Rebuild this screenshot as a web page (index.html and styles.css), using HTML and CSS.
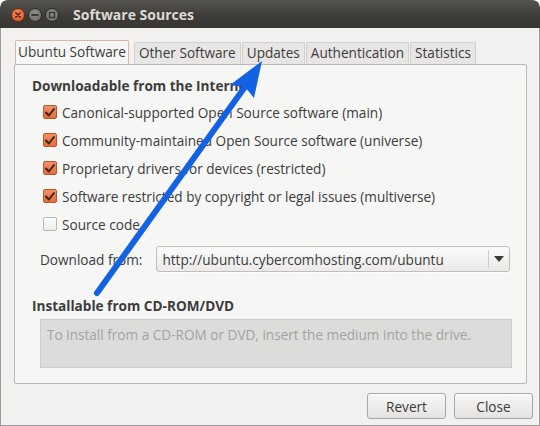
FILE: index.html
```html
<!DOCTYPE html>
<html>
<head>
<meta charset="utf-8">
<title>Software Sources</title>
<link rel="stylesheet" href="styles.css">
</head>
<body>
<div class="window">
  <div class="titlebar">
    <div class="controls">
      <span class="ctl ctl-close"><svg width="12" height="12" viewBox="0 0 12 12"><path d="M3.8 3.8 L8.2 8.2 M8.2 3.8 L3.8 8.2" stroke="#5a2010" stroke-width="1.6" stroke-linecap="round"/></svg></span>
      <span class="ctl"><svg width="12" height="12" viewBox="0 0 12 12"><path d="M3.2 6 H8.8" stroke="#3a3935" stroke-width="2" stroke-linecap="round"/></svg></span>
      <span class="ctl"><svg width="12" height="12" viewBox="0 0 12 12"><rect x="3.5" y="3.5" width="5" height="5" fill="none" stroke="#3a3935" stroke-width="1.4"/></svg></span>
    </div>
    <div class="title">Software Sources</div>
  </div>
  <div class="content">
    <div class="tabs">
      <div class="tab active">Ubuntu Software</div>
      <div class="tab">Other Software</div>
      <div class="tab">Updates</div>
      <div class="tab">Authentication</div>
      <div class="tab">Statistics</div>
    </div>
    <div class="panel">
      <div class="heading">Downloadable from the Internet</div>
      <div class="options">
        <div class="opt"><span class="cb checked"><svg width="12" height="11" viewBox="0 0 12 11"><path d="M2 5.5 L4.8 8.5 L10 2" fill="none" stroke="#3b2418" stroke-width="2" stroke-linecap="round" stroke-linejoin="round"/></svg></span><span>Canonical-supported Open Source software (main)</span></div>
        <div class="opt"><span class="cb checked"><svg width="12" height="11" viewBox="0 0 12 11"><path d="M2 5.5 L4.8 8.5 L10 2" fill="none" stroke="#3b2418" stroke-width="2" stroke-linecap="round" stroke-linejoin="round"/></svg></span><span>Community-maintained Open Source software (universe)</span></div>
        <div class="opt"><span class="cb checked"><svg width="12" height="11" viewBox="0 0 12 11"><path d="M2 5.5 L4.8 8.5 L10 2" fill="none" stroke="#3b2418" stroke-width="2" stroke-linecap="round" stroke-linejoin="round"/></svg></span><span>Proprietary drivers for devices (restricted)</span></div>
        <div class="opt"><span class="cb checked"><svg width="12" height="11" viewBox="0 0 12 11"><path d="M2 5.5 L4.8 8.5 L10 2" fill="none" stroke="#3b2418" stroke-width="2" stroke-linecap="round" stroke-linejoin="round"/></svg></span><span>Software restricted by copyright or legal issues (multiverse)</span></div>
        <div class="opt"><span class="cb"></span><span>Source code</span></div>
      </div>
      <div class="download-row">
        <span class="dl-label">Download from:</span>
        <div class="combo">
          <span class="combo-text">http://ubuntu.cybercomhosting.com/ubuntu</span>
          <span class="combo-btn"><svg width="10" height="6" viewBox="0 0 10 6"><path d="M0 0 H10 L5 6 Z" fill="#3c3c3c"/></svg></span>
        </div>
      </div>
      <div class="heading heading-cd">Installable from CD-ROM/DVD</div>
      <div class="cd-box">To install from a CD-ROM or DVD, insert the medium into the drive.</div>
    </div>
    <div class="actions">
      <button class="btn">Revert</button>
      <button class="btn">Close</button>
    </div>
  </div>
  <svg class="arrow" width="540" height="426" viewBox="0 0 540 426">
    <line x1="97" y1="293" x2="247" y2="84" stroke="#1262e3" stroke-width="6" stroke-linecap="round"/>
    <polygon points="262,61 254,98 245,87 230,85" fill="#1262e3"/>
  </svg>
</div>
</body>
</html>
```

FILE: styles.css
```css
* { box-sizing: border-box; }
html, body { margin: 0; padding: 0; background: #ffffff; }
body { font-family: "Open Sans", "DejaVu Sans", sans-serif; font-size: 13.6px; color: #3c3c3c; }

.window {
  position: relative;
  width: 540px;
  height: 426px;
  display: flex;
  flex-direction: column;
  overflow: hidden;
  border-radius: 7px 7px 0 0;
}

.titlebar {
  height: 28px;
  flex: none;
  display: flex;
  align-items: center;
  background: linear-gradient(#55544f, #3c3b37 60%, #383733);
  border-radius: 7px 7px 0 0;
  padding-left: 11px;
}
.controls { display: flex; gap: 3px; margin-top: 2px; }
.ctl {
  width: 14px;
  height: 14px;
  border-radius: 50%;
  background: radial-gradient(circle at 50% 35%, #8c8b86, #6a6964);
  border: 1px solid #2d2c29;
  display: flex;
  align-items: center;
  justify-content: center;
}
.ctl svg { display: block; flex: none; }
.ctl-close { background: radial-gradient(circle at 50% 35%, #f58d62, #e0521e); border-color: #6b2a12; }
.title {
  margin-left: 14px;
  margin-top: 1px;
  color: #dfdbd2;
  font-weight: bold;
  font-size: 14px;
}

.content {
  flex: 1;
  display: flex;
  flex-direction: column;
  background: #f2f1f0;
  border-left: 1px solid #9d9b97;
  border-right: 1px solid #9d9b97;
  border-bottom: 1px solid #9d9b97;
  padding: 12px 12px 0 13px;
}

.tabs { display: flex; align-items: flex-end; gap: 1px; height: 24px; padding-left: 1px; }
.tab {
  height: 22px;
  line-height: 20px;
  padding: 0 4px;
  background: #e7e6e4;
  border: 1px solid #d2d0cc;
  border-bottom: none;
  border-radius: 2px 2px 0 0;
  color: #3c3c3c;
}
.tab.active {
  height: 24px;
  line-height: 22px;
  background: #f6f6f5;
  border-color: #d8b7a3;
  margin-right: 4px;
  padding: 0 2px;
}

.panel {
  height: 320px;
  background: #f6f6f5;
  border: 1px solid #bab8b3;
  border-radius: 2px;
  padding: 12px 16px 0 17px;
  display: flex;
  flex-direction: column;
}
.heading { font-weight: bold; line-height: 18px; height: 18px; color: #3c3c3c; }

.options { display: flex; flex-direction: column; padding-left: 11px; margin-top: 3px; }
.opt { height: 28px; display: flex; align-items: center; gap: 5px; }
.cb {
  width: 14px;
  height: 14px;
  flex: none;
  border: 1px solid #b9b7b3;
  border-radius: 2px;
  background: linear-gradient(#fdfdfd, #eeeeec);
  display: flex;
  align-items: center;
  justify-content: center;
}
.cb.checked { background: linear-gradient(#f4906a, #e56a3a); border-color: #b4582f; }
.cb svg { display: block; }

.download-row { display: flex; align-items: center; gap: 14px; margin-top: 8px; padding-left: 8px; }
.combo {
  flex: 1;
  height: 26px;
  display: flex;
  align-items: center;
  background: linear-gradient(#fbfbfa, #ebeae8);
  border: 1px solid #c0beba;
  border-radius: 3px;
  box-shadow: 0 1px 0 #ffffff;
}
.combo-text { flex: 1; padding-left: 5px; color: #3c3c3c; }
.combo-btn {
  width: 21px;
  height: 18px;
  border-left: 1px solid #cfcdc9;
  display: flex;
  align-items: center;
  justify-content: center;
}
.combo-btn svg { display: block; }

.heading-cd { margin-top: 25px; }
.cd-box {
  margin: 4px -2px 0 8px;
  height: 49px;
  background: #dcdcdb;
  border: 1px solid #cfcecc;
  color: #a4a3a1;
  padding: 6px 6px;
  line-height: 18px;
}

.actions { display: flex; justify-content: flex-end; gap: 8px; margin-top: 9px; margin-right: -6px; }
.btn {
  width: 79px;
  height: 26px;
  font-family: inherit;
  font-size: 13.6px;
  color: #3c3c3c;
  background: linear-gradient(#f7f7f6, #e4e3e1);
  border: 1px solid #a9a7a3;
  border-radius: 3px;
  box-shadow: inset 0 1px 0 #ffffff;
  padding: 0;
}

.arrow { position: absolute; left: 0; top: 0; pointer-events: none; }
```
